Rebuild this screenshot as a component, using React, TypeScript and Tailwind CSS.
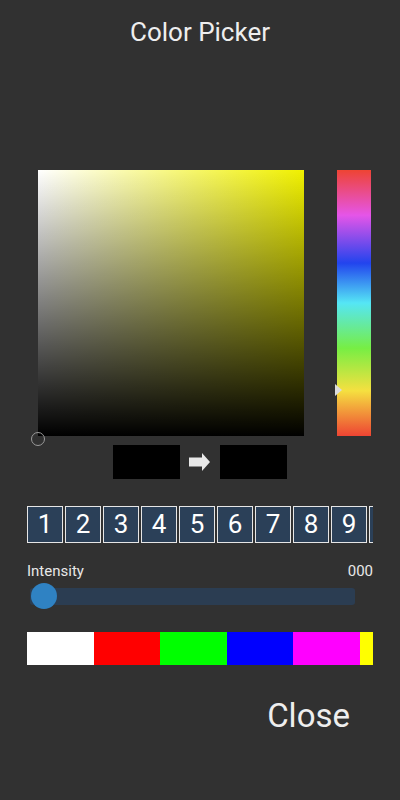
import React from "react";

export default function App() {
  const nums = [1, 2, 3, 4, 5, 6, 7, 8, 9, 10];
  const colors = ["#ffffff", "#ff0000", "#00ff00", "#0000ff", "#ff00ff", "#ffff00"];
  return (
    <div className="w-[400px] h-[800px] bg-[#313131] flex flex-col overflow-hidden text-[#eeeeee]" style={{ fontFamily: "Roboto, 'Liberation Sans', sans-serif" }}>
      <div className="pt-[15px] h-[48px] text-center text-[26px] leading-[34px]">Color Picker</div>
      <div className="mt-[122px] flex flex-row">
        <div className="relative ml-[38px] w-[266px] h-[266px] bg-[linear-gradient(to_top,#000000,rgba(0,0,0,0)),linear-gradient(to_right,#ffffff,#f0f000)]">
          <div className="absolute left-[-7px] bottom-[-10px] w-[14px] h-[14px] rounded-full border border-[#9a9a9a]"></div>
        </div>
        <div className="relative ml-[33px] w-[34px] h-[266px] bg-[linear-gradient(to_bottom,#ee4433_0%,#e555e8_17%,#2244ee_35%,#55e6f5_50%,#77ee44_67%,#f5e040_83%,#ee4433_100%)]">
          <svg className="absolute left-[-2px] top-[214px]" width="8" height="12" viewBox="0 0 8 12">
            <polygon points="0,0 7,6 0,12" fill="#dcdcdc" />
          </svg>
        </div>
      </div>
      <div className="mt-[9px] flex flex-row justify-center items-center">
        <div className="w-[67px] h-[34px] bg-black"></div>
        <div className="w-[40px] h-[34px] flex items-center justify-center">
          <svg width="22" height="18" viewBox="0 0 22 18">
            <polygon points="0,4.5 13,4.5 13,0 21,9 13,18 13,13.5 0,13.5" fill="#e8e8e8" />
          </svg>
        </div>
        <div className="w-[67px] h-[34px] bg-black"></div>
      </div>
      <div className="mt-[27px] ml-[27px] w-[346px] overflow-hidden flex flex-row gap-[2px]">
        {nums.map((n) => (
          <div key={n} className="shrink-0 w-[36px] h-[37px] border border-[#e6e6e6] bg-[#2b4058] flex items-center justify-center text-[26px] text-white">
            {n < 10 ? n : ""}
          </div>
        ))}
      </div>
      <div className="mt-[19px] mx-[27px] flex flex-row justify-between text-[15px] leading-[19px] text-[#e8e8e8]">
        <span>Intensity</span>
        <span>000</span>
      </div>
      <div className="ml-[30px] w-[325px] h-[30px] relative flex items-center">
        <div className="w-full h-[17px] rounded-[3px] bg-[#2b3d52]"></div>
        <div className="absolute left-[1px] top-[2px] w-[26px] h-[26px] rounded-full bg-[#2f82c3]"></div>
      </div>
      <div className="mt-[21px] ml-[27px] w-[346px] h-[33px] overflow-hidden flex flex-row">
        {colors.map((c) => (
          <div key={c} className="shrink-0 w-[66.6px] h-full" style={{ backgroundColor: c }}></div>
        ))}
      </div>
      <div className="mt-[33px] pr-[50px] text-right text-[33px] leading-[36px]">Close</div>
    </div>
  );
}
